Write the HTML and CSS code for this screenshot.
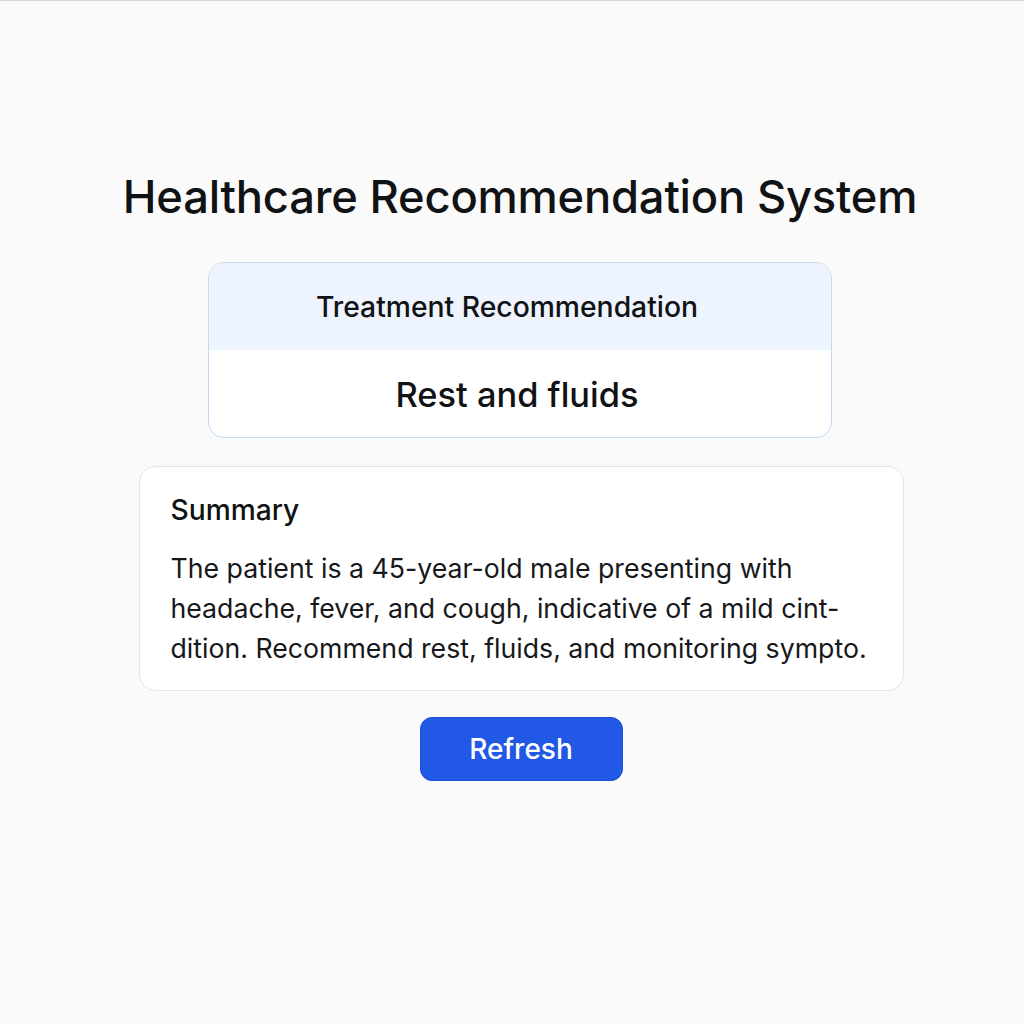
FILE: index.html
```html
<!DOCTYPE html>
<html>
<head>
<meta charset="utf-8">
<link rel="stylesheet" href="styles.css">
</head>
<body>
<main class="page">
  <h1 class="title">Healthcare Recommendation System</h1>
  <section class="rec-card">
    <div class="rec-head"><span class="rec-head-text">Treatment Recommendation</span></div>
    <div class="rec-body"><span class="rec-body-text">Rest and fluids</span></div>
  </section>
  <section class="summary-card">
    <h2 class="summary-title">Summary</h2>
    <p class="summary-text">The patient is a 45-year-old male presenting with<br>headache, fever, and cough, indicative of a mild cint-<br>dition. Recommend rest, fluids, and monitoring sympto.</p>
  </section>
  <button class="refresh">Refresh</button>
</main>
</body>
</html>
```

FILE: styles.css
```css
html, body {
  margin: 0;
  padding: 0;
  background: #fafafb;
  font-family: Inter, "Noto Sans", sans-serif;
  color: #111214;
}
body {
  border-top: 1px solid #d9d9dc;
  min-height: 1023px;
}
.page {
  display: flex;
  flex-direction: column;
  align-items: center;
  padding-top: 166px;
}
.title {
  margin: 0;
  font-size: 45.3px;
  font-weight: 500;
  line-height: 60px;
  letter-spacing: -0.2px;
  transform: translateX(8px);
}
.rec-card {
  margin-top: 35px;
  width: 624px;
  box-sizing: border-box;
  border: 1px solid #c3d9f5;
  border-radius: 16px;
  overflow: hidden;
  background: #ffffff;
  transform: translateX(8px);
}
.rec-head {
  height: 87px;
  background: #edf4fe;
  display: flex;
  align-items: center;
  justify-content: center;
}
.rec-head-text {
  font-size: 28.3px;
  font-weight: 500;
  transform: translateX(-13px);
}
.rec-body {
  height: 87px;
  display: flex;
  align-items: center;
  justify-content: center;
  font-size: 34.4px;
  font-weight: 500;
  padding-top: 2px;
  box-sizing: border-box;
}
.rec-body-text {
  transform: translateX(-3px);
}
.summary-card {
  margin-top: 28px;
  width: 765px;
  box-sizing: border-box;
  border: 1px solid #e3e4e7;
  border-radius: 16px;
  background: #ffffff;
  padding: 25px 30px 22px 31px;
  transform: translateX(9px);
}
.summary-title {
  margin: 0;
  font-size: 28.2px;
  font-weight: 500;
  line-height: 36px;
}
.summary-text {
  margin: 20px 0 0 0;
  font-size: 26.7px;
  font-weight: 400;
  line-height: 40px;
  color: #17181b;
}
.refresh {
  margin-top: 26px;
  width: 203px;
  height: 64px;
  border: 1px solid #1a4fd6;
  border-radius: 12px;
  background: #2159e6;
  color: #ffffff;
  font-family: Inter, "Noto Sans", sans-serif;
  font-size: 28px;
  font-weight: 500;
  transform: translateX(9px);
}
```
